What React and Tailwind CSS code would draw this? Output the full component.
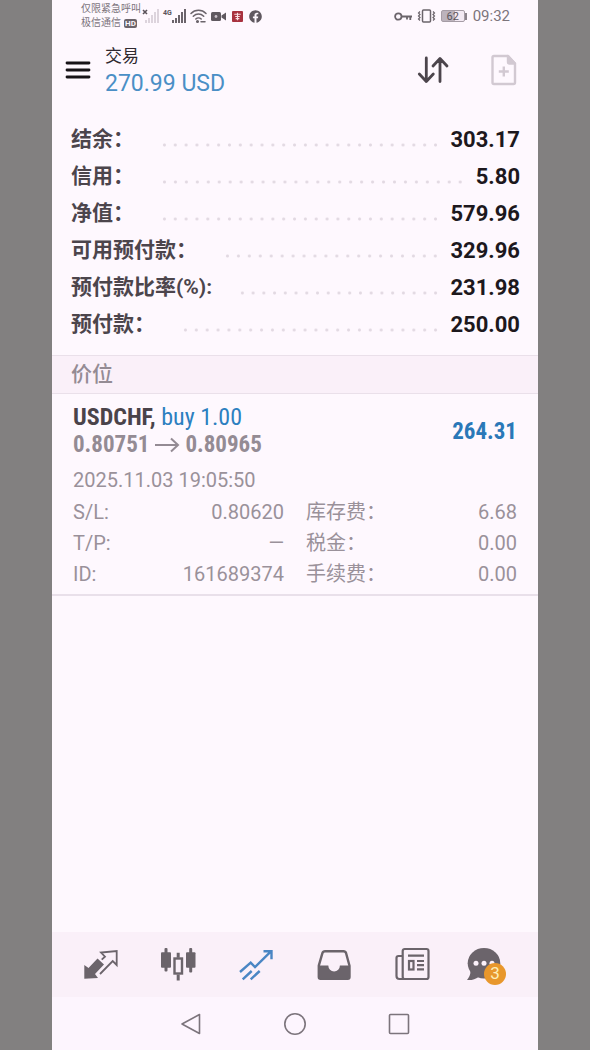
import React, { useState } from 'react';
import { FaFacebook } from 'react-icons/fa';

const summary = [
  { label: '结余：', value: '303.17' },
  { label: '信用：', value: '5.80' },
  { label: '净值：', value: '579.96' },
  { label: '可用预付款：', value: '329.96' },
  { label: '预付款比率(%):', value: '231.98' },
  { label: '预付款：', value: '250.00' },
];

const details = [
  { label: 'S/L:', value: '0.80620' },
  { label: '库存费：', value: '6.68' },
  { label: 'T/P:', value: '—' },
  { label: '税金：', value: '0.00' },
  { label: 'ID:', value: '161689374' },
  { label: '手续费：', value: '0.00' },
];

function SignalBars({ className }) {
  return (
    <svg width="15" height="14" viewBox="0 0 15 14" fill="currentColor" className={className}>
      <rect x="0" y="11" width="2" height="3" />
      <rect x="3" y="9" width="2" height="5" />
      <rect x="6" y="6" width="2" height="8" />
      <rect x="9" y="3" width="2" height="11" />
      <rect x="12" y="0" width="2" height="14" />
    </svg>
  );
}

function StatusBar() {
  return (
    <div className="flex h-8 items-center justify-between pl-[29px] pr-7 text-[#7c747c]">
      <div className="flex items-center">
        <div className="text-[10px] leading-[14px] whitespace-nowrap">
          <div>仅限紧急呼叫</div>
          <div className="flex items-center gap-[3px]">
            极信通信
            <span className="rounded-xs bg-[#6b646b] px-px text-[8px] font-bold leading-[9px] text-[#fdf6fd]">HD</span>
          </div>
        </div>
        <div className="flex items-center">
          <svg width="7" height="14" viewBox="0 0 7 14" stroke="#5b545b" strokeWidth="1.6" fill="none">
            <path d="M2 1l4 4M6 1l-4 4" />
          </svg>
          <SignalBars className="-ml-[3px] text-[#ddd4dd]" />
        </div>
        <div className="ml-[3px] flex items-start">
          <span className="text-[7px] font-bold leading-[8px] text-[#5b545b]">4G</span>
          <SignalBars className="text-[#6b646b]" />
        </div>
        <svg className="ml-[3px]" width="17" height="14" viewBox="0 0 17 14" fill="none" stroke="#6b646b" strokeWidth="1.5" strokeLinecap="round">
          <path d="M1 4.5C5 .2 12 .2 16 4.5M3.3 7.3c3-3 7.4-3 10.4 0M5.8 10c1.5-1.5 3.9-1.5 5.400 0" />
          <circle cx="7.5" cy="12.5" r=".8" fill="#6b646b" />
          <path d="M11 12.8h4" />
        </svg>
        <svg className="ml-1" width="15" height="11" viewBox="0 0 15 11" fill="#5f585f">
          <rect x="0" y="1" width="10" height="9" rx="1.5" />
          <path d="M10.5 4.500L15 1.500v8l-4.500-3z" />
          <circle cx="5" cy="5.5" r="1.4" fill="#c9c0c9" />
        </svg>
        <svg className="ml-[6px]" width="11" height="11" viewBox="0 0 12 12">
          <rect width="12" height="12" rx="1" fill="#a8323f" />
          <path d="M2.500 3.500h7M6 1.800v8.400M3.500 6h5M4 8.300h4" stroke="#f8dfe3" strokeWidth="1.200" />
        </svg>
        <FaFacebook className="ml-[6px] text-[#5f585f]" size={13} />
      </div>

      <div className="flex items-center">
        <svg width="18" height="9" viewBox="0 0 18 9" fill="none" stroke="#6b646b" strokeWidth="1.8">
          <circle cx="4.3" cy="4.5" r="3.2" />
          <path d="M7.500 4.500H18M16.300 4.500v3.500M13 4.500v3" />
        </svg>
        <svg className="ml-[5px]" width="19" height="14" viewBox="0 0 19 14" fill="none" stroke="#6b646b">
          <rect x="5.5" y="1" width="8" height="12" rx="1" strokeWidth="1.5" />
          <path d="M3 2.500L1.500 4 3 5.500 1.500 7 3 8.500 1.500 10 3 11.500M16 2.500L17.500 4 16 5.500 17.500 7 16 8.500 17.500 10 16 11.500" strokeWidth="1.2" />
        </svg>
        <div className="ml-[5px] flex items-center">
          <span className="flex h-3 w-6 items-center justify-center rounded-xs border border-[#a59ca5] bg-linear-to-r from-[#bcb3bc] from-60% to-[#f3eaf3] to-60% text-[11px] leading-none text-[#5b545b]">
            62
          </span>
          <span className="h-[7px] w-[2px] bg-[#8b838b]" />
        </div>
        <span className="ml-[6px] text-[15px] leading-5">09:32</span>
      </div>
    </div>
  );
}

function Header() {
  return (
    <header className="flex h-[76px] items-center pl-[13px] pr-[21px]">
      <button aria-label="Menu">
        <svg width="26" height="20" viewBox="0 0 26 20" stroke="#171317" strokeWidth="2.8" strokeLinecap="round">
          <path d="M2 3h22M2 10h22M2 17h22" />
        </svg>
      </button>
      <div className="ml-[14px] flex-1">
        <h1 className="text-[17px] leading-[27px] text-[#2f292f]">交易</h1>
        <p className="text-[23px] leading-[27px] text-[#4a8fc6]">270.99 USD</p>
      </div>
      <button aria-label="Sort">
        <svg width="34" height="30" viewBox="0 0 34 30" fill="none" stroke="#4c454c" strokeWidth="2.8" strokeLinecap="round" strokeLinejoin="round">
          <path d="M10.300 3v23M3.300 19l7 7.500 7-7.500M24 26.500V4M17 11l7-7.500 7 7.500" />
        </svg>
      </button>
      <button aria-label="New order" className="ml-[41px]">
        <svg width="26" height="32" viewBox="0 0 26 32" fill="none" stroke="#d2c9d2" strokeWidth="2.4" strokeLinejoin="round">
          <path d="M3 2H17l7 7.500V28.500a1.500 1.500 0 0 1-1.500 1.500H3a1.500 1.500 0 0 1-1.500-1.500v-25A1.500 1.500 0 0 1 3 2z" />
          <path d="M17 2v6a1.500 1.500 0 0 0 1.500 1.500H24z" fill="#d2c9d2" />
          <path d="M12.800 12.500v10M7.800 17.500h10" />
        </svg>
      </button>
    </header>
  );
}

function Position() {
  return (
    <article className="border-b-2 border-[#e9e0ea] px-[21px] pt-[10px] pb-1">
      <div className="flex items-center justify-between font-['Roboto_Condensed','Roboto','Noto_Sans_CJK_SC',sans-serif] text-[23px] leading-[27px]">
        <div>
          <p className="text-[24px] text-[#2c7fc0]">
            <span className="font-bold text-[#4a434a]">USDCHF,</span> buy 1.00
          </p>
          <p className="flex items-center font-bold text-[#948b94]">
            0.80751
            <svg className="mx-[5px]" width="26" height="16" viewBox="0 0 26 16" fill="none" stroke="currentColor" strokeWidth="2">
              <path d="M1 8h23M17 1.500l7 6.500-7 6.500" />
            </svg>
            0.80965
          </p>
        </div>
        <p className="font-bold text-[#2a78b8]">264.31</p>
      </div>
      <p className="mt-2 text-[20px] leading-[28px] text-[#9a919a]">2025.11.03 19:05:50</p>
      <dl className="mt-[3px] grid grid-cols-2 gap-x-[22px] text-[20px] leading-[31px] text-[#9a919a]">
        {details.map((d) => (
          <div key={d.label} className="flex justify-between">
            <dt>{d.label}</dt>
            <dd>{d.value}</dd>
          </div>
        ))}
      </dl>
    </article>
  );
}

const tabs = [
  {
    id: 'quotes',
    icon: (
      <svg width="36" height="36" viewBox="-1 -2 36 36">
        <path d="M1.300 16l4.200 3 9-9.500 6.500 6-9 9.500 3 4-13.700.7z" fill="#6b646b" />
        <path d="M18.700 10.700l3.300-3-4-4.200L33.700 2v14l-4-4L17 25" fill="none" stroke="#6b646b" strokeWidth="1.8" />
      </svg>
    ),
  },
  {
    id: 'charts',
    icon: (
      <svg width="36" height="36" viewBox="0 0 36 36" fill="#6b646b">
        <rect x="1" y="5.3" width="10" height="15.5" rx="1" />
        <rect x="4.5" y="1" width="3" height="23.5" rx="1" />
        <rect x="26" y="5.3" width="9.500" height="15.5" rx="1" />
        <rect x="29.2" y="1" width="3" height="24.5" rx="1" />
        <rect x="14.5" y="11.5" width="7.5" height="15" fill="none" stroke="#6b646b" strokeWidth="2.400" />
        <path d="M16.700 5.700h3v5h-3zM16.700 27.500h3v6h-3z" />
      </svg>
    ),
  },
  {
    id: 'trade',
    icon: (
      <svg width="36" height="36" viewBox="-1 -2 36 36" fill="none" stroke="#4a86c4" strokeWidth="2.4">
        <path d="M1 23l10.700-9.300L16 18 31.700 2.700M24.500 2.200h8v8M3.700 30.300l9-8.300M11.700 30.300l9-8.300" />
      </svg>
    ),
  },
  {
    id: 'history',
    icon: (
      <svg width="36" height="36" viewBox="-1 -2 36 36">
        <path d="M8 2.200h18.500c1.500 0 2.200.8 2.600 2l3.400 12.500V28a1.700 1.700 0 0 1-1.700 1.700H3.500A1.700 1.700 0 0 1 1.800 28V16.700L5.400 4.200c.4-1.200 1.100-2 2.600-2z" fill="none" stroke="#6b646b" strokeWidth="2.4" strokeLinejoin="round" />
        <path d="M1.500 16.500h9.800a5.800 6 0 0 0 11.600 0h9.800v13H1.500z" fill="#6b646b" />
      </svg>
    ),
  },
  {
    id: 'news',
    icon: (
      <svg width="36" height="36" viewBox="0 0 36 36" fill="none" stroke="#6b646b" strokeWidth="2.2">
        <rect x="8.7" y="2" width="25.8" height="30" rx="2" />
        <path d="M8.700 9H4.500a2 2 0 0 0-2 2v18a3 3 0 0 0 3 3h6" />
        <path d="M14 8.700h16M23 14h7M23 18.200h7M23 22.400h7" />
        <rect x="15" y="14" width="4.5" height="8.5" />
      </svg>
    ),
  },
  {
    id: 'messages',
    badge: 3,
    icon: (
      <svg width="48" height="36" viewBox="0 0 48 36" fill="#6b646b">
        <ellipse cx="18" cy="16.3" rx="16.3" ry="15.3" />
        <path d="M4.500 24c0 4-1.500 6.500-3.500 9 4.500.4 8.500-.6 11.500-3z" />
        <g fill="#fbf1fa">
          <circle cx="10" cy="16.3" r="2.5" />
          <circle cx="18" cy="16.3" r="2.5" />
          <circle cx="26" cy="16.3" r="2.5" />
        </g>
      </svg>
    ),
  },
];

function TabBar() {
  const [active, setActive] = useState('trade');

  return (
    <nav className="mt-auto grid h-[65px] grid-cols-6 bg-[#faf0f9] px-[9px]">
      {tabs.map((t) => (
        <button
          key={t.id}
          aria-label={t.id}
          aria-pressed={active === t.id}
          onClick={() => setActive(t.id)}
          className="flex items-center justify-center"
        >
          <span className="relative flex">
            {t.icon}
            {t.badge && (
              <span className="absolute right-2 -bottom-[2px] flex size-[22px] items-center justify-center rounded-full bg-[#e8972c] text-[17px] leading-none text-[#fdeeb8]">
                {t.badge}
              </span>
            )}
          </span>
        </button>
      ))}
    </nav>
  );
}

export default function App() {
  return (
    <div lang="zh-CN" className="min-h-screen bg-[#828080] px-[52px] font-['Roboto','Noto_Sans_CJK_SC',sans-serif]">
      <main className="flex min-h-screen flex-col bg-[#fef8fe]">
        <StatusBar />
        <Header />

        {/* Account summary */}
        <dl className="pt-[13px] pb-3 pl-[19px] pr-[18px] leading-[37px] font-bold">
          {summary.map((row) => (
            <div key={row.label} className="flex items-center">
              <dt className="text-[21px] text-[#4c454c]">{row.label}</dt>
              {/* dotted leader */}
              <span
                aria-hidden="true"
                className="mt-[10px] mr-[10px] ml-[25px] h-1 flex-1 bg-[radial-gradient(circle,#e2d9e2_1px,transparent_2px)] bg-[length:11px_4px] bg-repeat-round"
              />
              <dd className="text-[22px] text-[#1d181d]">{row.value}</dd>
            </div>
          ))}
        </dl>

        <h2 className="border-y border-[#eae0ea] bg-[#faf0f9] pl-[19px] text-[21px] leading-[37px] font-medium text-[#948b94]">
          价位
        </h2>

        <Position />
        <TabBar />

        {/* System navigation */}
        <div className="grid h-[53px] grid-cols-3 bg-[#fdf5fe] px-[87px]">
          <button aria-label="Back" className="flex items-center justify-center">
            <svg width="24" height="24" viewBox="0 0 24 24" fill="none" stroke="#7c747c" strokeWidth="1.6" strokeLinejoin="round">
              <path d="M20.500 2.500v19L3 12z" />
            </svg>
          </button>
          <button aria-label="Home" className="flex items-center justify-center">
            <svg width="24" height="24" viewBox="0 0 24 24" fill="none" stroke="#7c747c" strokeWidth="1.6">
              <circle cx="12" cy="12" r="10.2" />
            </svg>
          </button>
          <button aria-label="Recent apps" className="flex items-center justify-center">
            <svg width="24" height="24" viewBox="0 0 24 24" fill="none" stroke="#7c747c" strokeWidth="1.6">
              <rect x="2.500" y="2.500" width="19" height="19" rx="1" />
            </svg>
          </button>
        </div>
      </main>
    </div>
  );
}
